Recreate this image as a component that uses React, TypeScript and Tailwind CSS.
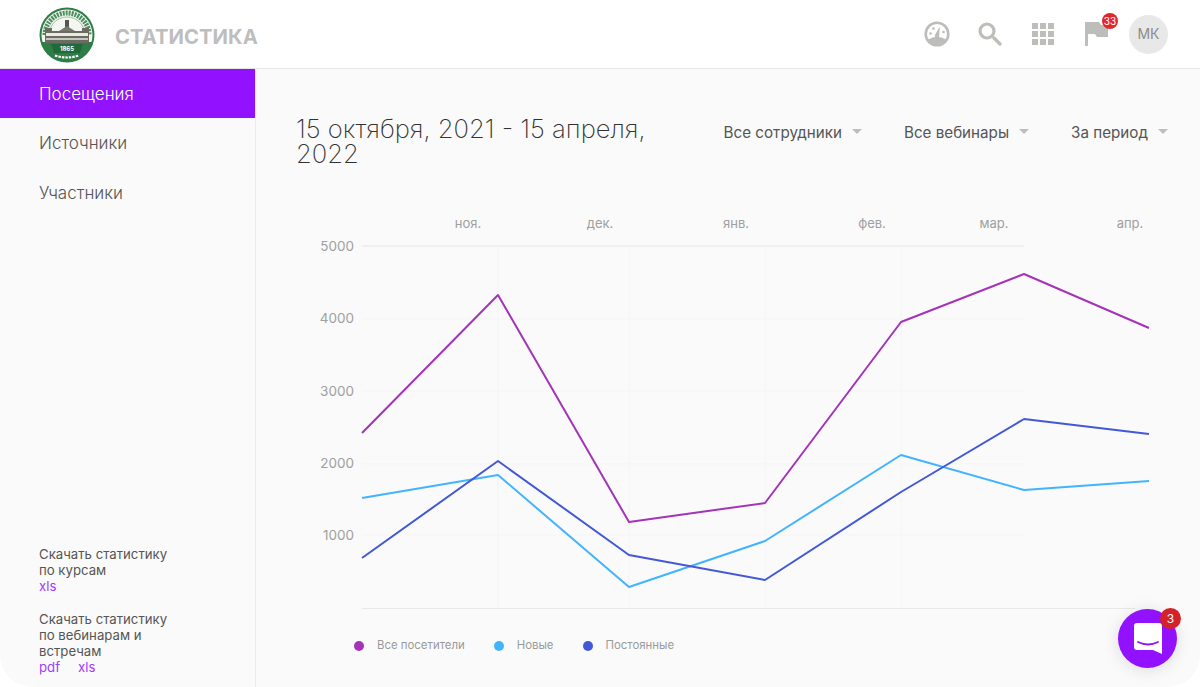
const xs = [362, 498, 629, 765, 901, 1024, 1149];

const series = [
  { name: "Все посетители", color: "#a433ba", dot: "bg-[#a433ba]", ys: [433, 295, 522, 503, 322, 274, 328] },
  { name: "Новые", color: "#42b4ff", dot: "bg-[#42b4ff]", ys: [498, 475, 587, 541, 455, 490, 481] },
  { name: "Постоянные", color: "#4358d6", dot: "bg-[#4358d6]", ys: [558, 461, 555, 580, 492, 419, 434] },
];

const yTicks = [
  { label: "5000", y: 246, labelY: 251 },
  { label: "4000", y: 319, labelY: 323 },
  { label: "3000", y: 391, labelY: 396 },
  { label: "2000", y: 464, labelY: 468 },
  { label: "1000", y: 535, labelY: 540 },
];

const months = [
  { label: "ноя.", x: 468 },
  { label: "дек.", x: 600 },
  { label: "янв.", x: 736 },
  { label: "фев.", x: 872 },
  { label: "мар.", x: 994 },
  { label: "апр.", x: 1130 },
];

const Logo = () => (
  <svg width="56" height="56" viewBox="0 0 56 56" className="mt-[2px]">
    <circle cx="28" cy="28" r="27.5" fill="#2f7d46" />
    <circle cx="28" cy="28" r="25.5" fill="#f4f6f1" />
    <path d="M6 28a22 22 0 0 1 44 0" fill="none" stroke="#4c8f5e" strokeWidth="5" strokeDasharray="2 1" />
    <path d="M10 28a18 18 0 0 1 36 0" fill="none" stroke="#9cc3a5" strokeWidth="1" />
    <path d="M2 35h52a27 27 0 0 1-52 0z" fill="#2f7d46" />
    <rect x="6" y="24" width="44" height="12" fill="#6a6c63" />
    <rect x="7" y="26" width="42" height="3" fill="#ecebe1" />
    <rect x="7" y="31" width="42" height="2" fill="#c8c7bc" />
    <rect x="26" y="13" width="4" height="11" fill="#55574f" />
    <path d="M20 24l8-5 8 5z" fill="#77796f" />
    <rect x="6" y="21" width="7" height="4" fill="#6a6c63" />
    <rect x="43" y="21" width="7" height="4" fill="#6a6c63" />
    <path d="M12 37h32l-3 9H15z" fill="#1f6a38" />
    <text x="28" y="43.5" textAnchor="middle" fontSize="6" fontWeight="700" fill="#ffffff">
      1865
    </text>
    <path d="M16 48.5q12 4 24 0" fill="none" stroke="#ffffff" strokeWidth="2.2" strokeDasharray="2.5 1" />
  </svg>
);

const GaugeIcon = () => (
  <svg width="26" height="26" viewBox="0 0 26 26">
    <circle cx="13" cy="13" r="11.3" fill="none" stroke="#bdbdb9" strokeWidth="2.6" />
    <path d="M4 18.5a11 11 0 0 0 18 0q-9-5.5-18 0z" fill="#bdbdb9" />
    <path d="M11.2 13.5l4.6-8-.6 9.2a2.2 2.2 0 1 1-4-1.2z" fill="#bdbdb9" />
    <circle cx="6.5" cy="12.5" r="1.3" fill="#bdbdb9" />
    <circle cx="9.5" cy="7.6" r="1.3" fill="#bdbdb9" />
    <circle cx="19.5" cy="11" r="1.3" fill="#bdbdb9" />
  </svg>
);

const SearchIcon = () => (
  <svg width="26" height="26" viewBox="0 0 26 26" className="ml-[27px]">
    <circle cx="10" cy="10" r="7" fill="none" stroke="#bdbdb9" strokeWidth="3.2" />
    <path d="M15.5 15.5l1.5 1.5" stroke="#bdbdb9" strokeWidth="2" />
    <path d="M17 17l6 6" stroke="#bdbdb9" strokeWidth="3.4" strokeLinecap="round" />
  </svg>
);

const GridIcon = () => (
  <div className="grid grid-cols-3 gap-[2px]">
    {Array.from({ length: 9 }).map((_, i) => (
      <span key={i} className="h-[6px] w-[6px] bg-[#bdbdb9]" />
    ))}
  </div>
);

const FlagIcon = () => (
  <svg width="23" height="24" viewBox="0 0 23 24">
    <path d="M0 0h3v24H0z" fill="#bdbdb9" />
    <path d="M3 0h11l2 3h7v12H12l-2-3H3z" fill="#bdbdb9" />
  </svg>
);

const Chart = () => (
  <svg className="block h-[420px] w-[944px]" viewBox="256 205 944 420">
    {yTicks.map((t, i) => (
      <g key={t.label}>
        <line x1="362" x2="1024" y1={t.y} y2={t.y} stroke={i === 0 ? "#ececec" : "#f5f5f5"} strokeWidth={i === 0 ? 1.5 : 1} />
        <text x="354" y={t.labelY} textAnchor="end" fontSize="13.5" fill="#a0a0a0">
          {t.label}
        </text>
      </g>
    ))}
    {xs.slice(1, 5).map((x) => (
      <line key={x} x1={x} x2={x} y1="247" y2="608" stroke="#f4f4f4" />
    ))}
    <line x1="362" x2="1135" y1="608.5" y2="608.5" stroke="#e8e8e8" />
    {months.map((m) => (
      <text key={m.label} x={m.x} y="228" textAnchor="middle" fontSize="13" fill="#a0a0a0">
        {m.label}
      </text>
    ))}
    {series.map((s) => (
      <polyline
        key={s.name}
        points={s.ys.map((y, i) => `${xs[i]},${y}`).join(" ")}
        fill="none"
        stroke={s.color}
        strokeWidth="2"
        strokeLinejoin="round"
      />
    ))}
  </svg>
);

const Filter = ({ label }: { label: string }) => (
  <div className="flex items-center gap-[10px] text-[15.2px] text-[#555]">
    <span>{label}</span>
    <span className="mb-[3px] h-0 w-0 border-x-[5px] border-t-[5px] border-x-transparent border-t-[#bdbdbd]" />
  </div>
);

export default function App() {
  return (
    <div className="relative h-[687px] w-[1200px] overflow-hidden rounded-b-[32px] bg-[#fafafa] font-['Inter',sans-serif]">
      <header className="flex h-[69px] items-center border-b border-[#e6e6e6] bg-white pr-[32px] pl-[39px]">
        <Logo />
        <h1 className="mt-[7px] ml-[20px] text-[20.3px] font-bold text-[#bebebe]">СТАТИСТИКА</h1>
        <div className="ml-auto flex items-center">
          <GaugeIcon />
          <SearchIcon />
          <div className="ml-[29px]">
            <GridIcon />
          </div>
          <div className="relative ml-[31px]">
            <FlagIcon />
            <span className="absolute -top-[9px] left-[17px] flex h-[16px] w-[16px] items-center justify-center rounded-full bg-[#e2262c] text-[10px] text-white">
              33
            </span>
          </div>
          <div className="ml-[21px] flex h-[39px] w-[39px] items-center justify-center rounded-full bg-[#e8e8e8] text-sm text-[#8c8c8c]">
            МК
          </div>
        </div>
      </header>

      <div className="flex h-[618px]">
        <aside className="flex w-[256px] shrink-0 flex-col justify-between border-r border-[#ececec] pb-[12px]">
          <nav className="text-[17px] font-light text-[#555]">
            <div className="flex h-[49px] items-center bg-[#9211ff] pt-[2px] pl-[39px] text-white">Посещения</div>
            <div className="flex h-[50px] items-center pt-[2px] pl-[39px]">Источники</div>
            <div className="flex h-[49px] items-center pt-[2px] pl-[39px]">Участники</div>
          </nav>
          <div className="pl-[39px] text-[13.2px] leading-[16px] text-[#555]">
            <p>Скачать статистику</p>
            <p>по курсам</p>
            <p className="text-[#a23cff]">xls</p>
            <p className="mt-[17px]">Скачать статистику</p>
            <p>по вебинарам и</p>
            <p>встречам</p>
            <p className="flex gap-[18px] text-[#a23cff]">
              <span>pdf</span>
              <span>xls</span>
            </p>
          </div>
        </aside>

        <main className="min-w-0 flex-1">
          <div className="flex items-start pt-[47px] pr-[32px] pl-[40px]">
            <h2 className="w-[390px] text-[25.6px] leading-[25px] font-extralight text-[#333]">
              15 октября, 2021 - 15 апреля, 2022
            </h2>
            <div className="ml-auto flex gap-[42px] pt-[6px]">
              <Filter label="Все сотрудники" />
              <Filter label="Все вебинары" />
              <Filter label="За период" />
            </div>
          </div>
          <div className="mt-[39px]">
            <Chart />
          </div>
          <div className="mt-[12px] flex items-center pl-[98px] text-[11.4px] text-[#9a9a9a]">
            {series.map((s) => (
              <div key={s.name} className="mr-[29px] flex items-center gap-[13px]">
                <span className={`h-[10px] w-[10px] rounded-full ${s.dot}`} />
                <span>{s.name}</span>
              </div>
            ))}
          </div>
        </main>
      </div>

      <div className="absolute top-[609px] left-[1118px] flex h-[59px] w-[59px] items-center justify-center rounded-full bg-[#9211ff] shadow-[0_2px_16px_rgba(0,0,0,0.12)]">
        <svg width="28" height="32" viewBox="0 0 28 32">
          <path d="M3 0h22a3 3 0 0 1 3 3v28l-9-4H3a3 3 0 0 1-3-3V3a3 3 0 0 1 3-3z" fill="#ffffff" />
          <path d="M4 19q10 5 20 0" fill="none" stroke="#9211ff" strokeWidth="1.8" strokeLinecap="round" />
        </svg>
        <span className="absolute -top-[1px] -right-[4px] flex h-[21px] w-[21px] items-center justify-center rounded-full bg-[#d3222a] text-xs text-white">
          3
        </span>
      </div>
    </div>
  );
}
